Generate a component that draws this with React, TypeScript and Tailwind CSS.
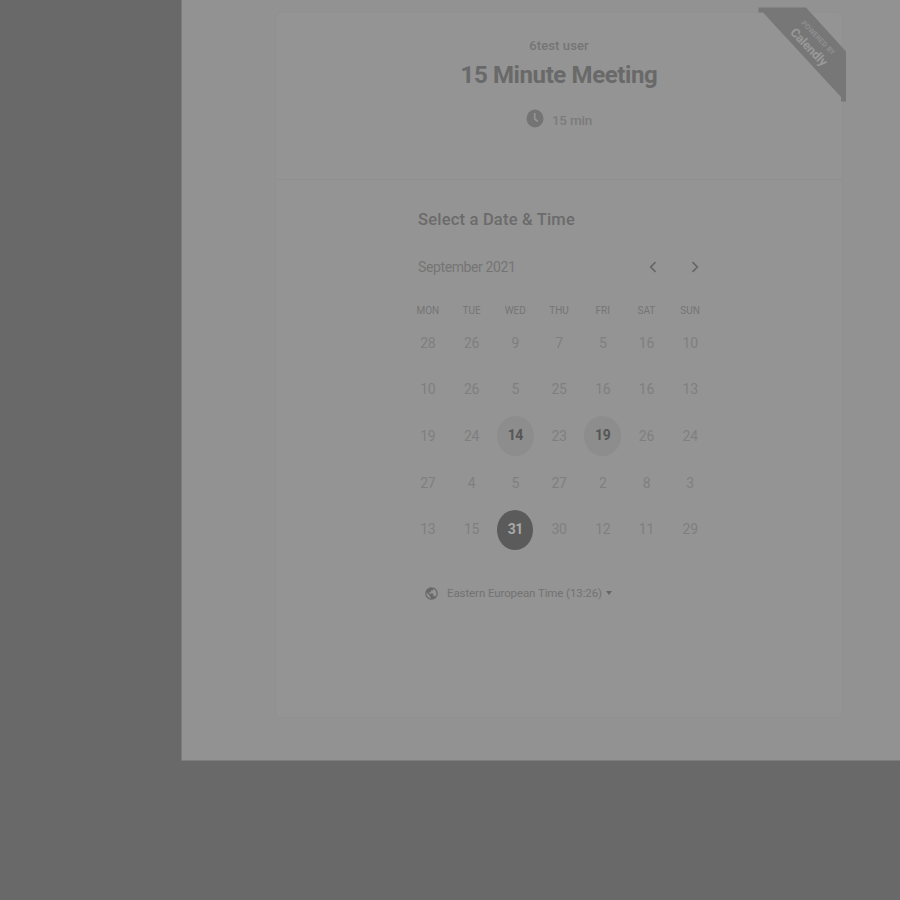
import React from "react";

type Day = { n: number; kind?: "open" | "selected" };

const weekdays = ["MON", "TUE", "WED", "THU", "FRI", "SAT", "SUN"];

const weeks: Day[][] = [
  [{ n: 28 }, { n: 26 }, { n: 9 }, { n: 7 }, { n: 5 }, { n: 16 }, { n: 10 }],
  [{ n: 10 }, { n: 26 }, { n: 5 }, { n: 25 }, { n: 16 }, { n: 16 }, { n: 13 }],
  [{ n: 19 }, { n: 24 }, { n: 14, kind: "open" }, { n: 23 }, { n: 19, kind: "open" }, { n: 26 }, { n: 24 }],
  [{ n: 27 }, { n: 4 }, { n: 5 }, { n: 27 }, { n: 2 }, { n: 8 }, { n: 3 }],
  [{ n: 13 }, { n: 15 }, { n: 31, kind: "selected" }, { n: 30 }, { n: 12 }, { n: 11 }, { n: 29 }],
];

function DayCell({ n, kind }: Day) {
  if (kind === "selected") {
    return (
      <span className="flex h-[40px] w-[36px] items-center justify-center rounded-[50%] bg-[#5b5b5b] pb-px text-[14px] font-bold tracking-[-0.4px] text-[#a9a9a9]">
        {n}
      </span>
    );
  }
  if (kind === "open") {
    return (
      <span className="flex h-[40px] w-[37px] items-center justify-center rounded-[50%] bg-[#8d8d8d] pb-px text-[14px] font-bold tracking-[-0.4px] text-[#565656]">
        {n}
      </span>
    );
  }
  return <span className="text-[14px] tracking-[-0.3px] text-[#7f7f7f]">{n}</span>;
}

function Ribbon() {
  return (
    <div className="absolute left-[482px] top-[-6px] h-[96px] w-[90px]">
      <svg className="absolute inset-0" width="90" height="96" viewBox="0 0 90 96">
        <path d="M0.500 0.500H48L88 44.500V94.500H83V90L5 5.500H0.500Z" fill="#777" />
      </svg>
      <div className="absolute left-[55px] top-[36px] flex h-0 w-0 rotate-[46deg] flex-col items-center justify-center gap-[2px] whitespace-nowrap leading-none">
        <span className="text-[7px] font-medium leading-[8px] tracking-[0.2px] text-[#929292]">POWERED BY</span>
        <span className="text-[12.500px] font-bold leading-[13px] tracking-[-0.2px] text-[#999]">Calendly</span>
      </div>
    </div>
  );
}

export default function App() {
  return (
    <div className="h-[900px] w-[900px] overflow-hidden bg-[#696969] pl-[181px] font-['Roboto','Liberation_Sans',sans-serif]">
      <main className="h-[761px] border-b border-l border-[#7c7c7c] bg-[#929292] pl-[93px] pt-[12px]">
        <section className="relative h-[706px] w-[568px] rounded-[6px] border border-[#909090] bg-[#949494]">
          <Ribbon />
          <header className="flex h-[167px] flex-col items-center border-b border-[#8f8f8f] pt-[25px]">
            <p className="h-4 text-[13px] font-medium leading-4 tracking-[0.1px] text-[#757575]">6test user</p>
            <h1 className="mt-[5px] h-8 text-[24px] font-bold leading-8 tracking-[-0.38px] text-[#696969]">15 Minute Meeting</h1>
            <div className="mt-[19px] flex h-5 items-center gap-[8px]">
              <svg width="18" height="19" viewBox="0 0 18 19" className="mb-[3px]">
                <ellipse cx="9" cy="9.500" rx="8.500" ry="9" fill="#747474" />
                <path d="M8.700 4V9.800L11.800 12.500" fill="none" stroke="#949494" strokeWidth="1.700" />
              </svg>
              <span className="pt-px text-[13.500px] font-medium tracking-[-0.2px] text-[#7b7b7b]">15 min</span>
            </div>
          </header>
          <div className="pl-[142px] pt-[30px]">
            <h2 className="h-5 text-[16.500px] font-medium leading-5 tracking-[0.2px] text-[#6b6b6b]">Select a Date &amp; Time</h2>
            <div className="mt-[27px] flex h-5 w-[281px] items-center">
              <span className="text-[14px] leading-5 tracking-[-0.38px] text-[#747474]">September 2021</span>
              <div className="ml-auto flex gap-[34px]">
                <svg width="8" height="12" viewBox="0 0 8 12" fill="none" stroke="#666" strokeWidth="1.700">
                  <path d="M6.500 1.200L1.700 6L6.500 10.800" />
                </svg>
                <svg width="8" height="12" viewBox="0 0 8 12" fill="none" stroke="#666" strokeWidth="1.700">
                  <path d="M1.500 1.200L6.300 6L1.500 10.800" />
                </svg>
              </div>
            </div>
            <div className="-ml-[12px] mt-[24px] grid w-[306px] grid-cols-7 text-center text-[10px] leading-5 text-[#747474]">
              {weekdays.map((day) => (
                <span key={day}>{day}</span>
              ))}
            </div>
            <div className="-ml-[12px] -mt-px grid h-[233px] w-[306px] grid-cols-7 grid-rows-5">
              {weeks.flat().map((day, index) => (
                <div key={index} className="flex items-center justify-center">
                  <DayCell {...day} />
                </div>
              ))}
            </div>
            <div className="ml-[6px] mt-[30px] flex h-5 items-center text-[#727272]">
              <svg width="15" height="15" viewBox="0 0 24 24" fill="#696969">
                <path d="M12 2C6.480 2 2 6.480 2 12s4.480 10 10 10 10-4.480 10-10S17.520 2 12 2zm-1 17.930c-3.950-.49-7-3.850-7-7.930 0-.62.080-1.210.21-1.790L9 15v1c0 1.100.9 2 2 2v1.930zm6.900-2.540c-.26-.81-1-1.390-1.900-1.390h-1v-3c0-.55-.45-1-1-1H8v-2h2c.55 0 1-.45 1-1V7h2c1.100 0 2-.9 2-2v-.41c2.930 1.190 5 4.060 5 7.410 0 2.080-.8 3.970-2.100 5.390z" />
              </svg>
              <span className="ml-[8px] text-[11.500px] leading-5 tracking-[-0.1px]">Eastern European Time (13:26)</span>
              <span className="ml-[4px] border-x-[3px] border-t-[4px] border-x-transparent border-t-[#666]" />
            </div>
          </div>
        </section>
      </main>
    </div>
  );
}
